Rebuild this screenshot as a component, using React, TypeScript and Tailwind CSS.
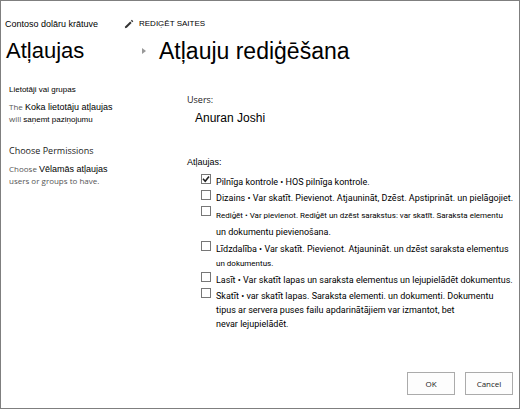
import { ReactNode } from 'react';

type Permission = {
    id: string;
    checked?: boolean;
    label: ReactNode;
    className: string;
};

const permissions: Permission[] = [
    {
        id: 'full',
        checked: true,
        label: 'Pilnīga kontrole • HOS pilnīga kontrole.',
        className: 'leading-[14px]',
    },
    {
        id: 'design',
        label: 'Dizains • Var skatīt. Pievienot. Atjaunināt, Dzēst. Apstiprināt. un pielāgojiet.',
        className: 'leading-[14px]',
    },
    {
        id: 'edit',
        label: (
            <>
                <span className="text-[8px]">Rediģēt • Var pievienot. Rediģēt un dzēst sarakstus: var skatīt. Saraksta elementu</span>
                <br />
                un dokumentu pievienošana.
            </>
        ),
        className: 'leading-[16px]',
    },
    {
        id: 'contribute',
        label: (
            <>
                Līdzdalība • Var skatīt. Pievienot. Atjaunināt. un dzēst saraksta elementus
                <br />
                <span className="text-[8px]">un dokumentus.</span>
            </>
        ),
        className: 'leading-[14px]',
    },
    {
        id: 'read',
        label: 'Lasīt • Var skatīt lapas un saraksta elementus un lejupielādēt dokumentus.',
        className: 'leading-[14px]',
    },
    {
        id: 'view',
        label: (
            <>
                Skatīt • var skatīt lapas. Saraksta elementi. un dokumenti. Dokumentu
                <br />
                tipus ar servera puses failu apdarinātājiem var izmantot, bet
                <br />
                nevar lejupielādēt.
            </>
        ),
        className: 'leading-[14px]',
    },
];

function PencilIcon() {
    return (
        <svg viewBox="0 0 10 10" className="h-[10px] w-[10px]" aria-hidden="true">
            <path d="M0.8 9.2 1.4 7.3 6.2 2.5 7.6 3.9 2.8 8.7Z" fill="#333" />
            <path d="M6.9 1.8 7.9 0.8 9.3 2.2 8.3 3.2Z" fill="#333" />
        </svg>
    );
}

function PermissionRow({ id, checked, label, className }: Permission) {
    return (
        <li className="flex items-start gap-[5px]">
            <span className="relative flex shrink-0">
                <input
                    id={id}
                    type="checkbox"
                    defaultChecked={checked}
                    className="peer h-[10px] w-[10px] appearance-none border border-[#777] bg-white"
                />
                <svg viewBox="0 0 10 10" className="pointer-events-none absolute inset-0 hidden h-[10px] w-[10px] peer-checked:block" aria-hidden="true">
                    <path d="M2 4.8 4.2 7.2 8 2.4" fill="none" stroke="#222" strokeWidth="1.6" />
                </svg>
            </span>
            <label htmlFor={id} className={`pt-px font-[Roboto,sans-serif] text-[9px] ${className}`}>
                {label}
            </label>
        </li>
    );
}

export default function App() {
    return (
        <div className="flex min-h-screen flex-col border border-[#7f7f7f] bg-white font-['Liberation_Sans',Arial,sans-serif] text-black">
            <header className="grid grid-cols-[118px_1fr] gap-y-[5px] pt-[15px]">
                <a href="#" className="pl-[4px] text-[9px] leading-[16px] whitespace-nowrap">Contoso dolāru krātuve</a>
                <a href="#" className="flex items-center gap-[5px] pl-[5px] text-[8px] leading-[16px]">
                    <PencilIcon />
                    REDIĢĒT SAITES
                </a>
                <h1 className="pl-[5px] text-[22px] leading-[28px]">Atļaujas</h1>
                <div className="flex items-center pl-[23px]">
                    <svg viewBox="0 0 4 6" className="h-[6px] w-[4px]" aria-hidden="true">
                        <path d="M0 0 4 3 0 6Z" fill="#999" />
                    </svg>
                    <h2 className="pl-[13px] text-[23px] leading-[28px]">Atļauju rediģēšana</h2>
                </div>
            </header>

            <main className="grid grid-cols-[186px_1fr] pt-[18px]">
                <aside className="pl-[8px]">
                    <h3 className="text-[8px] leading-[14px]">Lietotāji vai grupas</h3>
                    <p className="pt-[4px] font-['Open_Sans',sans-serif] text-[8px] leading-[11px] text-[#555]">
                        The <span className="font-['Liberation_Sans',Arial,sans-serif] text-[9px] text-black">Koka lietotāju atļaujas</span>
                        <br />
                        will <span className="font-['Liberation_Sans',Arial,sans-serif] text-black">saņemt paziņojumu</span>
                    </p>
                    <h3 className="pt-[18px] font-['Open_Sans',sans-serif] text-[9px] leading-[16px] text-[#222]">Choose Permissions</h3>
                    <p className="pt-[4px] font-['Open_Sans',sans-serif] text-[8px] leading-[12px] text-[#555]">
                        Choose <span className="font-['Liberation_Sans',Arial,sans-serif] text-[9px] text-black">Vēlamās atļaujas</span>
                        <br />
                        users or groups to have.
                    </p>
                </aside>

                <form id="permissions" className="pt-[10px]">
                    <h3 className="font-['Open_Sans',sans-serif] text-[9px] leading-[14px] text-[#222]">Users:</h3>
                    <p className="pt-[3px] pl-[8px] text-[12px] leading-[16px]">Anuran Joshi</p>
                    <fieldset className="pt-[29px]">
                        <legend className="float-left text-[9px] leading-[14px]">Atļaujas:</legend>
                        <ul className="clear-both flex flex-col gap-px pt-[5px] pl-[14px]">
                            {permissions.map((p) => (
                                <PermissionRow key={p.id} {...p} />
                            ))}
                        </ul>
                    </fieldset>
                </form>
            </main>

            <footer className="mt-auto flex justify-end gap-[10px] pr-[6px] pb-[13px] font-['Open_Sans',sans-serif] text-[8px] text-[#222]">
                <button type="submit" form="permissions" className="h-[23px] w-[48px] border border-[#ababab] bg-[#fdfdfd]">
                    OK
                </button>
                <button type="button" className="h-[23px] w-[48px] border border-[#ababab] bg-[#fdfdfd]">
                    Cancel
                </button>
            </footer>
        </div>
    );
}
